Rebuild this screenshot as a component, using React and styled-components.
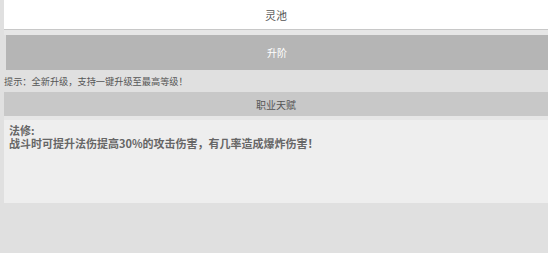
import React from 'react'
import styled, { createGlobalStyle } from 'styled-components'

const GlobalStyle = createGlobalStyle`
  body {
    margin: 0;
    background: #e0e0e0;
    font-family: "Noto Sans CJK SC", "Noto Sans", sans-serif;
  }
`

function App() {
    return (
        <Page>
            <GlobalStyle />
            <Header>灵池</Header>
            <Divider />
            <UpgradeButton>升阶</UpgradeButton>
            <Hint>提示：全新升级，支持一键升级至最高等级！</Hint>
            <SectionTitle>职业天赋</SectionTitle>
            <Content>
                <p>法修:</p>
                <p>战斗时可提升法伤提高30%的攻击伤害，有几率造成爆炸伤害！</p>
            </Content>
        </Page>
    )
}

export default App


const Page = styled.div`
    width: 548px;
    height: 253px;
    display: flex;
    flex-direction: column;
    background: #e0e0e0;
`

const Header = styled.div`
    margin-left: 4px;
    height: 29px;
    background: #ffffff;
    border-bottom: 1px solid #c8c8c8;
    display: flex;
    align-items: center;
    justify-content: center;
    font-size: 11px;
    color: #555;
`

const Divider = styled.div`
    margin-left: 4px;
    height: 5px;
    background: #e6e6e6;
`

const UpgradeButton = styled.div`
    margin-left: 6px;
    height: 35px;
    background: #b5b5b5;
    color: #fff;
    font-size: 10px;
    display: flex;
    align-items: center;
    justify-content: center;
`

const Hint = styled.div`
    height: 22px;
    padding-left: 4px;
    display: flex;
    align-items: center;
    font-size: 9.2px;
    color: #555;
    white-space: nowrap;
`

const SectionTitle = styled.div`
    margin-left: 4px;
    height: 24px;
    background: #c8c8c8;
    border-bottom: 4px solid #e6e6e6;
    display: flex;
    align-items: center;
    justify-content: center;
    font-size: 10px;
    color: #555;
`

const Content = styled.div`
    margin-left: 4px;
    height: 83px;
    box-sizing: border-box;
    padding: 4px 5px;
    background: #eeeeee;
    color: #666;
    font-size: 11px;
    font-weight: bold;
    line-height: 13px;

    p{
        margin: 0;
    }
`
